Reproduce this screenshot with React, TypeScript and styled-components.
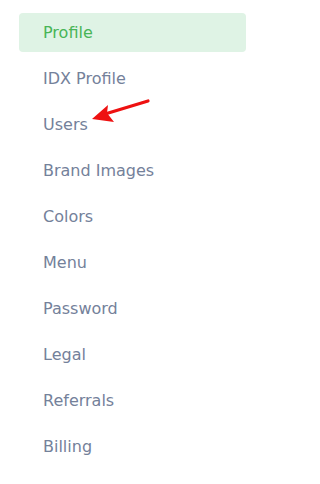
import styled, { createGlobalStyle } from 'styled-components';

const GlobalStyle = createGlobalStyle`
  html, body {
    margin: 0;
    padding: 0;
    background: #ffffff;
  }
  body {
    font-family: "DejaVu Sans", "Open Sans", sans-serif;
  }
`;

const SideNav = styled.nav`
  display: flex;
  flex-direction: column;
  gap: 7px;
  width: 227px;
  padding: 13px 0 0 19px;
`;

const NavItem = styled.a<{ $active?: boolean }>`
  position: relative;
  display: flex;
  align-items: center;
  height: 39px;
  padding-left: 24px;
  border-radius: 4px;
  font-size: 16px;
  line-height: 20px;
  text-decoration: none;
  color: ${(p) => (p.$active ? '#48b557' : '#74819a')};
  background: ${(p) => (p.$active ? '#dff3e5' : 'transparent')};
`;

const Pointer = styled.svg`
  position: absolute;
  left: 69px;
  top: -10px;
  width: 62px;
  height: 30px;
  overflow: visible;
`;

const items = [
  'Profile',
  'IDX Profile',
  'Users',
  'Brand Images',
  'Colors',
  'Menu',
  'Password',
  'Legal',
  'Referrals',
  'Billing',
];

export default function App() {
  return (
    <>
      <GlobalStyle />
      <SideNav>
        {items.map((label, i) => (
          <NavItem key={label} href="#" $active={i === 0}>
            {label}
            {label === 'Users' && (
              <Pointer viewBox="0 0 62 30">
                <line x1="17" y1="19" x2="60" y2="6" stroke="#ee1111" strokeWidth="3.2" strokeLinecap="round" />
                <polygon points="4,24 20,10 19,18 26,27" fill="#ee1111" />
              </Pointer>
            )}
          </NavItem>
        ))}
      </SideNav>
    </>
  );
}
